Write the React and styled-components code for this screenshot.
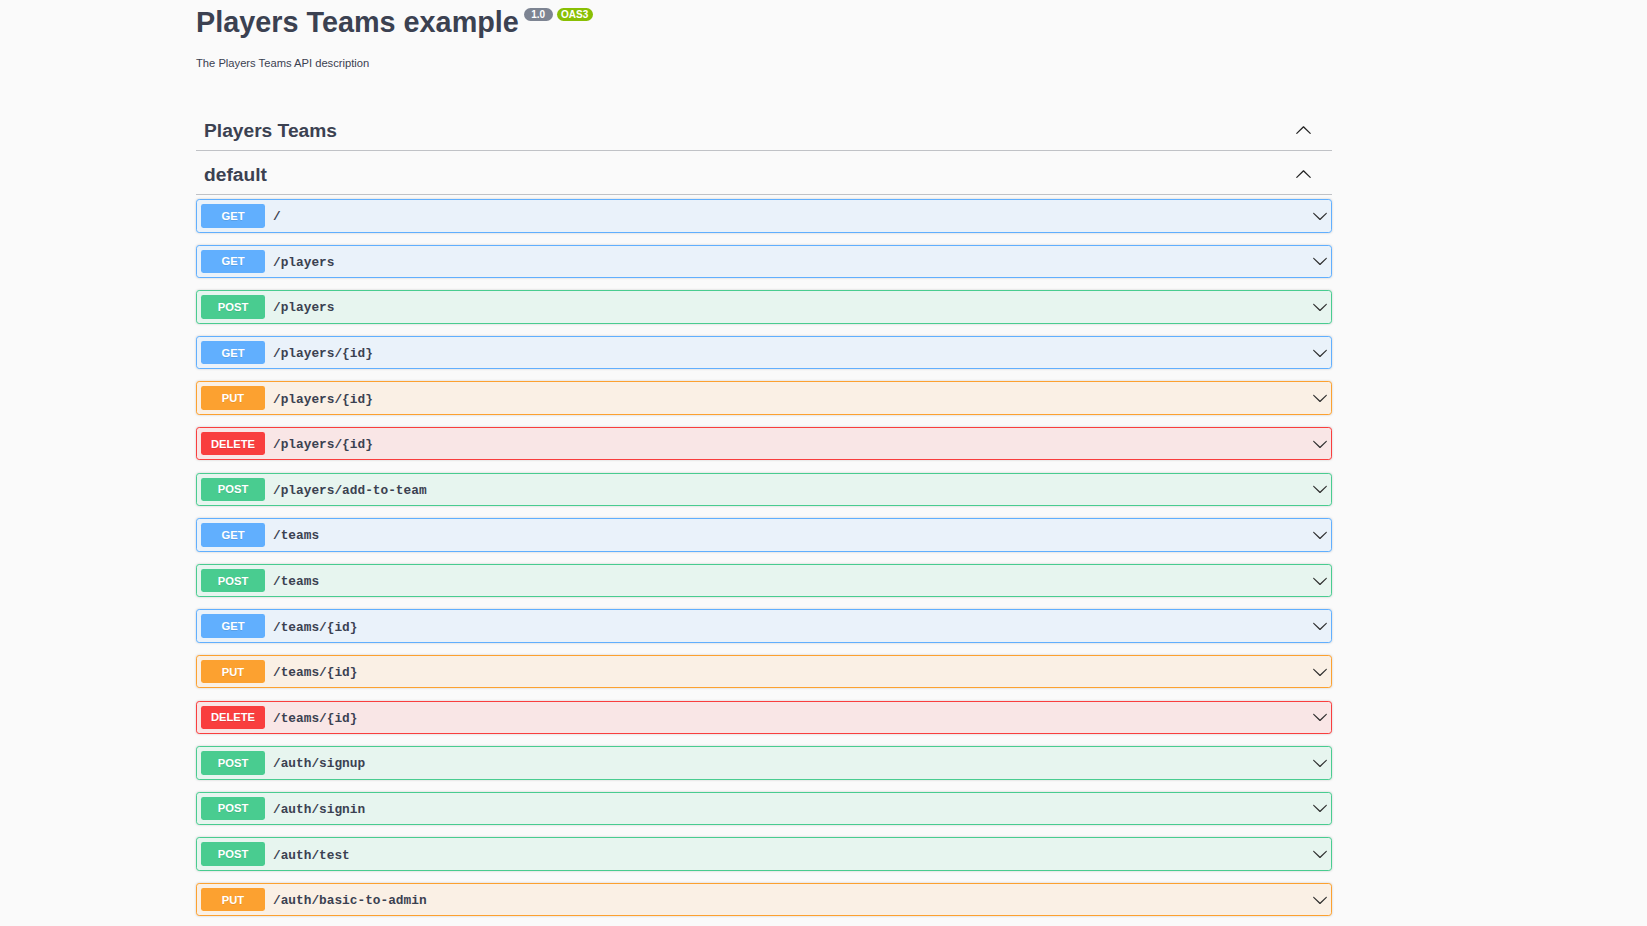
import React from "react";
import styled, { createGlobalStyle } from "styled-components";

const GlobalStyle = createGlobalStyle`
  html, body {
    margin: 0;
    padding: 0;
    background: #fafafa;
    overflow: hidden;
  }
  body {
    font-family: "Liberation Sans", Arial, sans-serif;
    color: #3b4151;
  }
`;

const METHOD_COLORS = {
  GET: "97, 175, 254",
  POST: "73, 204, 144",
  PUT: "252, 161, 48",
  DELETE: "249, 62, 62",
};

const operations = [
  ["GET", "/"],
  ["GET", "/players"],
  ["POST", "/players"],
  ["GET", "/players/{id}"],
  ["PUT", "/players/{id}"],
  ["DELETE", "/players/{id}"],
  ["POST", "/players/add-to-team"],
  ["GET", "/teams"],
  ["POST", "/teams"],
  ["GET", "/teams/{id}"],
  ["PUT", "/teams/{id}"],
  ["DELETE", "/teams/{id}"],
  ["POST", "/auth/signup"],
  ["POST", "/auth/signin"],
  ["POST", "/auth/test"],
  ["PUT", "/auth/basic-to-admin"],
];

function ArrowDown({ size = 16 }) {
  return (
    <svg width={size} height={size} viewBox="0 0 20 20" aria-hidden="true">
      <path d="M17.418 6.109c.272-.268.709-.268.979 0s.271.701 0 .969l-7.908 7.83c-.27.268-.707.268-.979 0l-7.908-7.83c-.27-.268-.27-.701 0-.969.271-.268.709-.268.979 0L10 13.25l7.418-7.141z" />
    </svg>
  );
}

function ArrowUp({ size = 17 }) {
  return (
    <svg width={size} height={size} viewBox="0 0 20 20" aria-hidden="true">
      <path d="M17.418 13.891c.272.268.709.268.979 0s.271-.701 0-.969l-7.908-7.83c-.27-.268-.707-.268-.979 0l-7.908 7.83c-.27.268-.27.701 0 .969.271.268.709.268.979 0L10 6.75l7.418 7.141z" />
    </svg>
  );
}

function OperationRow({ method, path }) {
  return (
    <OpBlock $rgb={METHOD_COLORS[method]}>
      <Method $rgb={METHOD_COLORS[method]}>{method}</Method>
      <Path>{path}</Path>
      <RowArrow>
        <ArrowDown />
      </RowArrow>
    </OpBlock>
  );
}

export default function App() {
  return (
    <>
      <GlobalStyle />
      <Wrapper>
        <Info>
          <Title>
            Players Teams example
            <Badge>{" 1.0 "}</Badge>
            <Badge $stamp>OAS3</Badge>
          </Title>
          <Description>The Players Teams API description</Description>
        </Info>

        <TagHeader>
          <TagName>Players Teams</TagName>
          <TagArrow>
            <ArrowUp />
          </TagArrow>
        </TagHeader>

        <TagHeader $last>
          <TagName>default</TagName>
          <TagArrow>
            <ArrowUp />
          </TagArrow>
        </TagHeader>

        <OpList>
          {operations.map(([method, path], i) => (
            <OperationRow key={i} method={method} path={path} />
          ))}
        </OpList>
      </Wrapper>
    </>
  );
}

const Wrapper = styled.div`
  margin-left: 196px;
  width: 1136px;
`;

const Info = styled.div`
  padding-top: 4px;
  margin-bottom: 37px;
`;

const Title = styled.h2`
  margin: 0;
  font-size: 28.8px;
  line-height: 36px;
  font-weight: 700;
  color: #3b4151;
`;

const Badge = styled.small`
  display: inline-block;
  vertical-align: top;
  margin: 4.3px 0 0 5px;
  padding: 0.6px 4.6px;
  border-radius: 46px;
  background: ${(p) => (p.$stamp ? "#89bf04" : "#7d8492")};
  color: #fff;
  font-size: 10px;
  line-height: 11.4px;
  font-weight: 700;
  white-space: pre;
  & + & {
    margin-left: 4px;
  }
`;

const Description = styled.p`
  margin: 16px 0 0;
  font-size: 11.2px;
  line-height: 14px;
  color: #3b4151;
`;

const TagHeader = styled.div`
  display: flex;
  align-items: center;
  box-sizing: border-box;
  height: 44px;
  padding: 4px 20px 0 8px;
  border-bottom: 1px solid rgba(59, 65, 81, 0.3);
  margin-bottom: ${(p) => (p.$last ? "4px" : "0")};
`;

const TagName = styled.h3`
  flex: 1;
  margin: 0;
  font-size: 19.2px;
  font-weight: 700;
  color: #3b4151;
`;

const TagArrow = styled.span`
  display: flex;
  fill: #222;
`;

const OpList = styled.div`
  display: flex;
  flex-direction: column;
`;

const OpBlock = styled.div`
  display: flex;
  align-items: center;
  box-sizing: border-box;
  height: 33.5px;
  padding: 0 4px;
  margin-bottom: 12.1px;
  border: 1px solid rgb(${(p) => p.$rgb});
  border-radius: 3.2px;
  background: rgba(${(p) => p.$rgb}, 0.1);
  box-shadow: 0 0 2.4px rgba(0, 0, 0, 0.19);
`;

const Method = styled.span`
  display: flex;
  align-items: center;
  justify-content: center;
  min-width: 64px;
  height: 23.5px;
  border-radius: 2.4px;
  background: rgb(${(p) => p.$rgb});
  color: #fff;
  font-size: 11.2px;
  font-weight: 700;
  text-shadow: 0 1px 0 rgba(0, 0, 0, 0.1);
`;

const Path = styled.span`
  flex: 1;
  padding: 2px 8px 0;
  font-family: "Liberation Mono", "Courier New", monospace;
  font-size: 12.8px;
  font-weight: 700;
  color: #3b4151;
`;

const RowArrow = styled.span`
  display: flex;
  margin-right: -1px;
  fill: #303030;
`;
